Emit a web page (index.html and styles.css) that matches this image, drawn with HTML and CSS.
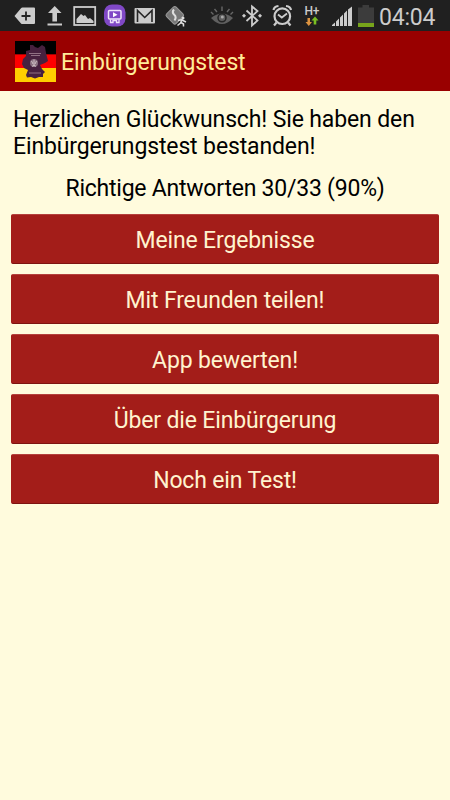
FILE: index.html
```html
<!DOCTYPE html>
<html lang="de">
<head>
  <meta charset="UTF-8" />
  <title>Einbürgerungstest</title>
  <link rel="stylesheet" href="styles.css">
</head>
<body>
  <div class="status-bar">
    <svg width="40" height="31" viewBox="0 0 40 31">
      <path d="M14.500 16L21 8.200Q21.500 7.500 22.500 7.500H34Q35 7.500 35 8.500V23Q35 24 34 24H22.500Q21.500 24 21 23.500Z" fill="#ccc"/>
      <path d="M26 11.500V20.500M21.500 16H30.500" stroke="#222" stroke-width="1.800"/>
    </svg>
    <svg width="30" height="31" viewBox="40 0 30 31">
      <path d="M54.700 6L61.500 13H57V21.500H52.400V13H48Z" fill="#ccc"/>
      <path d="M47.500 24.500H62" stroke="#ccc" stroke-width="2"/>
    </svg>
    <svg width="30" height="31" viewBox="70 0 30 31">
      <rect x="74.200" y="7" width="21" height="18" fill="none" stroke="#ccc" stroke-width="1.800"/>
      <path d="M76.500 23V19L81 14L83.500 16L85 15L88 19L90 18L93.500 21V23Z" fill="#ccc"/>
    </svg>
    <svg width="30" height="31" viewBox="100 0 30 31">
      <rect x="104" y="4.500" width="21.500" height="22" rx="8" fill="#8048c6"/>
      <rect x="108.500" y="10.500" width="12.500" height="8.500" rx="1" fill="none" stroke="#eee3fa" stroke-width="1.500"/>
      <path d="M113 12.300L117.500 14.800L113 17.200Z" fill="#fff"/>
      <path d="M110.500 19.500V22.500H113V20.500H116.500V22.500H119V19.500" fill="none" stroke="#eee3fa" stroke-width="1.300"/>
    </svg>
    <svg width="30" height="31" viewBox="130 0 30 31">
      <rect x="134.500" y="8" width="20.500" height="15.500" rx="1" fill="#ccc"/>
      <path d="M137.500 22V10.500L144.700 17.500L152 10.500V22" fill="none" stroke="#252525" stroke-width="1.600"/>
    </svg>
    <svg width="45" height="31" viewBox="160 0 45 31">
      <rect x="168" y="8.500" width="13.500" height="13.500" rx="2" fill="#777" stroke="#999" transform="rotate(45 174.700 15.300)"/>
      <path d="M174 9.500Q171.500 12 174 14.500Q177 17 174.500 20.500" fill="none" stroke="#ddd" stroke-width="2"/>
      <circle cx="183" cy="18" r="1.500" fill="#ddd"/>
      <path d="M178 20.500L182 19.500L180.500 23L177.500 25.500M181 22.500L183.500 24V26.500M182 20L186 22" fill="none" stroke="#ddd" stroke-width="1.500"/>
    </svg>
    <svg width="33" height="31" viewBox="205 0 33 31">
      <path d="M211 18Q222 9 233 18Q222 30 211 18Z" fill="#606060"/>
      <circle cx="222" cy="17.800" r="4" fill="#606060" stroke="#242424" stroke-width="1.500"/>
      <path d="M222 6.500V11M214.500 9L217 12M229.500 9L227 12M211 12L213.500 14.500M233 12L230.500 14.500" stroke="#686868" stroke-width="1.400"/>
      <circle cx="222.300" cy="17" r="1.500" fill="#aaa"/>
    </svg>
    <svg width="30" height="31" viewBox="238 0 30 31">
      <path d="M246.500 10.500L257.500 20.500L252 25.500V6.500L257.500 11L246.500 21" fill="none" stroke="#ccc" stroke-width="1.800"/>
      <path d="M242 15.800L244 13.800L246 15.800L244 17.800ZM258 15.800L260 13.800L262 15.800L260 17.800Z" fill="#ccc"/>
    </svg>
    <svg width="32" height="31" viewBox="268 0 32 31">
      <circle cx="282.300" cy="16.200" r="7.800" fill="none" stroke="#ccc" stroke-width="2.200"/>
      <path d="M273.500 10Q274 6.500 278.500 6M291 10Q290.500 6.500 286 6M276.500 22.500L274 25.500M288 22.500L290.500 25.500" fill="none" stroke="#ccc" stroke-width="2.200"/>
      <path d="M278 14.500L281.800 17.500L287 13.500" fill="none" stroke="#ccc" stroke-width="1.800"/>
    </svg>
    <svg width="26" height="31" viewBox="300 0 26 31">
      <text class="network" x="304.500" y="14.500">H+</text>
      <path d="M307.500 18H310V22H312L308.800 26L305.500 22H307.500Z" fill="#dc9340"/>
      <path d="M315 16.500L318.500 20.500H316.300V24.500H313.700V20.500H311.500Z" fill="#7abf22"/>
    </svg>
    <svg width="29" height="31" viewBox="326 0 29 31">
      <path d="M332 26V25L335 22.500V26ZM336 26V21.500L339 18.500V26ZM340 26V17.500L343 14.500V26ZM344 26V13.500L347 10.500V26ZM348 26V9.500L352 6.500V26Z" fill="#ccc"/>
    </svg>
    <svg width="21" height="31" viewBox="355 0 21 31">
      <path d="M358 27V7.500H362.500V5H369V7.500H374V27Z" fill="#3c3c3c"/>
      <path d="M358 23H374V27H358Z" fill="#78a51b"/>
    </svg>
    <span class="clock">04:04</span>
  </div>

  <div class="action-bar">
    <svg class="logo" width="41" height="41" viewBox="0 0 41 41">
      <path d="M0 0H41V13.500H0Z" fill="#000"/>
      <path d="M0 13.500H41V27H0Z" fill="#f00"/>
      <path d="M0 27H41V41H0Z" fill="#ffce00"/>
      <path d="M15 4L18 4L20 6L23 7L27 4L30 6L31 12L33 20L30 22L25 24L27 28L30 31L28 33L28 36L24 36L20 37.500L16 36L12 36.500L11 34L13 29L9 27L7 23L8 18L11 15L11 10L15 9Z" fill="#47213f"/>
      <path d="M14 12.500H26M16 14.500H25M14 32H26" stroke="#98798b" stroke-width="0.900"/>
      <circle cx="19" cy="22" r="4" fill="#8a7180"/>
      <path d="M19 18.500V25.500M16.500 20L18 23M21.500 20L20 23M17 25.500L19 24L21 25.500" fill="none" stroke="#cfc0c4"/>
    </svg>
    <h1 class="title">Einbürgerungstest</h1>
  </div>

  <div class="content">
    <p class="message">Herzlichen Glückwunsch! Sie haben den Einbürgerungstest bestanden!</p>
    <p class="score">Richtige Antworten 30/33 (90%)</p>
    <div class="buttons">
      <button class="btn">Meine Ergebnisse</button>
      <button class="btn">Mit Freunden teilen!</button>
      <button class="btn">App bewerten!</button>
      <button class="btn">Über die Einbürgerung</button>
      <button class="btn">Noch ein Test!</button>
    </div>
  </div>
</body>
</html>
```
FILE: styles.css
```css
body {
  margin: 0;
  min-height: 100vh;
  background-color: #fffbdd;
  font-family: Roboto, sans-serif;
  color: #000;
}

.status-bar {
  display: flex;
  height: 31px;
  background-color: #202020;
}

.status-bar svg {
  flex: none;
}

.network {
  font-size: 12px;
  font-weight: 500;
  letter-spacing: -0.3px;
  fill: #ccc;
}

.clock {
  margin-left: 3px;
  font-size: 23px;
  letter-spacing: -0.2px;
  line-height: 35px;
  color: #ccc;
}

.action-bar {
  display: flex;
  align-items: center;
  height: 60px;
  padding-left: 15px;
  background-color: #990000;
}

.title {
  margin: 4px 0 0 5px;
  font-size: 23px;
  font-weight: normal;
  letter-spacing: -0.13px;
  line-height: 30px;
  color: #ffeb99;
}

.content {
  padding: 16px 11px 0;
}

.message {
  margin: 0 2px;
  font-size: 23px;
  letter-spacing: -0.13px;
  line-height: 26.5px;
}

.score {
  margin: 16px 0 12px;
  font-size: 23px;
  letter-spacing: -0.23px;
  line-height: 26px;
  text-align: center;
}

.buttons {
  display: flex;
  flex-direction: column;
  gap: 10px;
}

.btn {
  height: 50px;
  padding: 2px 0 0;
  border: 1px solid #a31d19;
  border-top-color: #b5403c;
  border-bottom-color: #7d1210;
  border-radius: 2px;
  background-color: #a31d19;
  font-family: inherit;
  font-size: 23px;
  letter-spacing: -0.15px;
  color: #fff3cf;
}
```
